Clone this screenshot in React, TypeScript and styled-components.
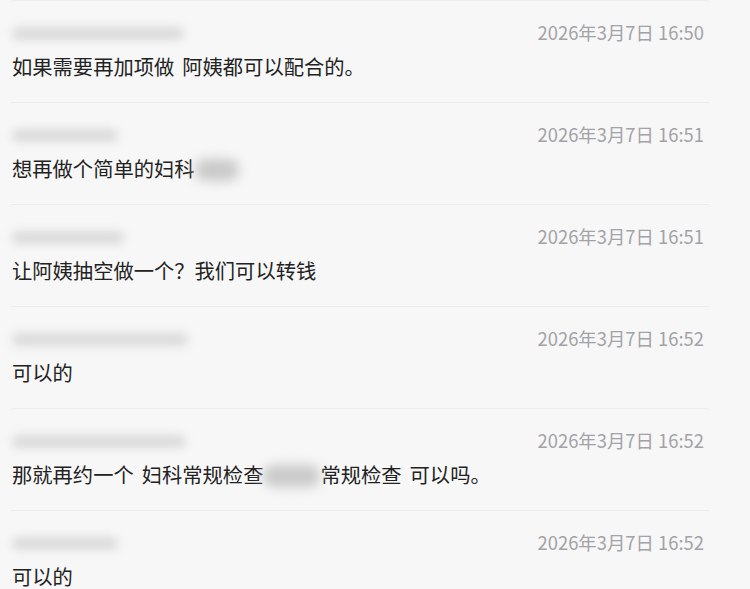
import React from "react"
import styled, { createGlobalStyle } from "styled-components"

interface Message {
  nameWidth: number
  time: string
  parts: (string | number)[]
}

const GlobalStyle = createGlobalStyle`
  html, body {
    margin: 0;
    padding: 0;
    background: #f7f7f7;
  }
  body {
    font-family: "Noto Sans CJK SC", "Noto Sans", sans-serif;
  }
`

const Page = styled.div`
  width: 750px;
  height: 589px;
  overflow: hidden;
  background: #f7f7f7;
  padding: 0 41px 0 11px;
  box-sizing: border-box;
`

const List = styled.div`
  display: flex;
  flex-direction: column;
  border-top: 1px solid #ececec;
`

const Item = styled.div`
  display: flex;
  flex-direction: column;
  gap: 8px;
  height: 102px;
  box-sizing: border-box;
  padding: 19px 5px 0 1px;
  border-bottom: 1px solid #ececec;
`

const Header = styled.div`
  display: flex;
  align-items: center;
  justify-content: space-between;
  height: 24px;
`

const BlurredName = styled.span<{ $w: number }>`
  display: block;
  width: ${p => p.$w}px;
  height: 13px;
  margin-top: 2px;
  border-radius: 7px;
  background: #dadada;
  filter: blur(5px);
`

const Time = styled.span`
  font-size: 18.4px;
  line-height: 24px;
  color: #a3a3a7;
  white-space: nowrap;
`

const Text = styled.div`
  font-size: 20.3px;
  line-height: 28px;
  word-spacing: 3.5px;
  color: #222;
  white-space: nowrap;
`

const BlurredWord = styled.span<{ $w: number }>`
  display: inline-block;
  width: ${p => p.$w}px;
  height: 22px;
  vertical-align: -4px;
  border-radius: 11px;
  background: #c9c9c9;
  filter: blur(6px);
`

const messages: Message[] = [
  { nameWidth: 172, time: "2026年3月7日 16:50", parts: ["如果需要再加项做 阿姨都可以配合的。"] },
  { nameWidth: 106, time: "2026年3月7日 16:51", parts: ["想再做个简单的妇科", 44] },
  { nameWidth: 112, time: "2026年3月7日 16:51", parts: ["让阿姨抽空做一个？我们可以转钱"] },
  { nameWidth: 176, time: "2026年3月7日 16:52", parts: ["可以的"] },
  { nameWidth: 174, time: "2026年3月7日 16:52", parts: ["那就再约一个 妇科常规检查", 57, "常规检查 可以吗。"] },
  { nameWidth: 106, time: "2026年3月7日 16:52", parts: ["可以的"] },
]

const App = () => {
  return (
    <Page>
      <GlobalStyle />
      <List>
        {messages.map((m, i) => (
          <Item key={i}>
            <Header>
              <BlurredName $w={m.nameWidth} />
              <Time>{m.time}</Time>
            </Header>
            <Text>
              {m.parts.map((p, j) =>
                typeof p === "number" ? <BlurredWord key={j} $w={p} /> : <React.Fragment key={j}>{p}</React.Fragment>
              )}
            </Text>
          </Item>
        ))}
      </List>
    </Page>
  )
}

export default App
